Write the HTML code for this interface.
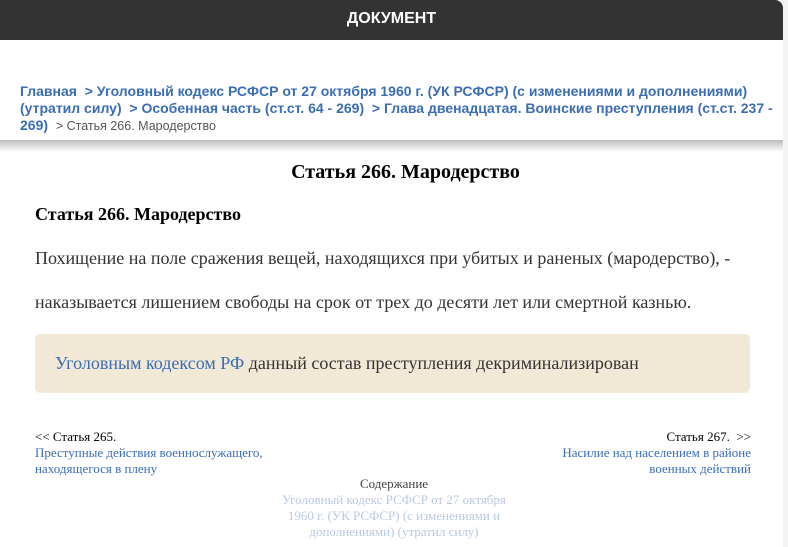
<!DOCTYPE html>
<html><head><meta charset="utf-8"><style>
body{margin:0;width:788px;height:547px;overflow:hidden;background:#f4f4f4;font-family:"Liberation Serif",serif;position:relative}
.wrap{position:absolute;left:0;top:0;width:783px;height:547px;background:#fff}
.hdr{height:40px;background:#333;border-top-right-radius:8px;color:#fff;font:bold 16px "Liberation Sans",sans-serif;text-align:center;line-height:38px}
.bc{position:absolute;top:83px;left:20px;width:760px;font:bold 14px/17px "Liberation Sans",sans-serif;color:#3a6db5}
.bc .g{color:#555;font-weight:normal;font-size:12.5px}
.shadow{position:absolute;top:140px;left:0;width:783px;height:12px;background:linear-gradient(#bbb,rgba(255,255,255,0))}
h1{position:absolute;top:160px;left:14px;width:783px;text-align:center;margin:0;font-size:20px;line-height:24px}
.h2{position:absolute;top:203px;left:35px;font-weight:bold;font-size:18px;line-height:22px}
.p{position:absolute;left:35px;font-size:18px;color:#333;line-height:22px;white-space:nowrap}
.box{position:absolute;left:35px;top:334px;width:715px;height:59px;background:#f1e9d5;border-radius:5px;font-size:18px;color:#333;line-height:59px;padding-left:20px;box-sizing:border-box}
.box a{color:#3a6db5}
.nav{position:absolute;font-size:13px;line-height:16px}
a{color:#3a6db5;text-decoration:none}
</style></head><body><div class="wrap">
<div class="hdr">ДОКУМЕНТ</div>
<div class="bc">Главная &nbsp;&gt; Уголовный кодекс РСФСР от 27 октября 1960 г. (УК РСФСР) (с изменениями и дополнениями) (утратил силу) &nbsp;&gt; Особенная часть (ст.ст. 64 - 269) &nbsp;&gt; Глава двенадцатая. Воинские преступления (ст.ст. 237 - 269) &nbsp;<span class="g">&gt; Статья 266. Мародерство</span></div>
<div class="shadow"></div>
<h1>Статья 266. Мародерство</h1>
<div class="h2">Статья 266. Мародерство</div>
<div class="p" style="top:247px">Похищение на поле сражения вещей, находящихся при убитых и раненых (мародерство), -</div>
<div class="p" style="top:291px">наказывается лишением свободы на срок от трех до десяти лет или смертной казнью.</div>
<div class="box"><a>Уголовным кодексом РФ</a> данный состав преступления декриминализирован</div>
<div class="nav" style="left:35px;top:429px">&lt;&lt; Статья 265.<br><a>Преступные действия военнослужащего,<br>находящегося в плену</a></div>
<div class="nav" style="right:32px;top:429px;text-align:right">Статья 267. &nbsp;&gt;&gt;<br><a>Насилие над населением в районе<br>военных действий</a></div>
<div class="nav" style="left:280px;width:228px;top:476px;text-align:center;color:#444">Содержание<br><span style="color:#b9c9e4">Уголовный кодекс РСФСР от 27 октября 1960 г. (УК РСФСР) (с изменениями и дополнениями) (утратил силу)</span></div>
</div></body></html>
